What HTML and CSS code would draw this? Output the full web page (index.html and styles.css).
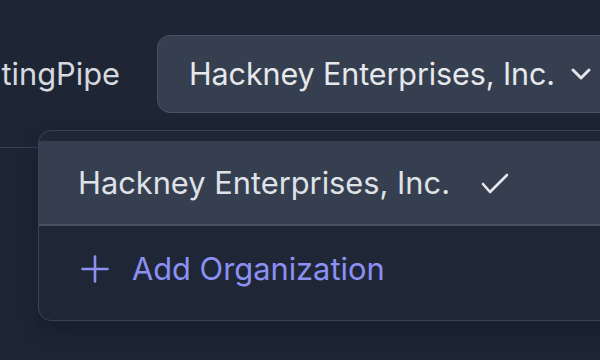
FILE: index.html
```html
<!DOCTYPE html>
<html>
<head>
<meta charset="utf-8">
<link rel="stylesheet" href="styles.css">
</head>
<body>
<div class="page">
  <header class="header">
    <span class="brand">tingPipe</span>
    <button class="org-button">
      <span class="org-name">Hackney Enterprises, Inc.</span>
      <svg class="chevron" width="20" height="12" viewBox="0 0 20 12"><polyline points="2,2 10,10 18,2" fill="none" stroke="#e5e7eb" stroke-width="3" stroke-linecap="round" stroke-linejoin="round"/></svg>
    </button>
  </header>
  <div class="dropdown">
    <div class="item item-active">
      <span class="item-text">Hackney Enterprises, Inc.</span>
      <svg class="check" width="28" height="22" viewBox="0 0 28 22"><polyline points="2,11 9,19 26,2" fill="none" stroke="#e5e7eb" stroke-width="2.6" stroke-linecap="round" stroke-linejoin="round"/></svg>
    </div>
    <div class="item item-add">
      <svg class="plus" width="28" height="28" viewBox="0 0 28 28"><path d="M14 1.5V26.5M1.5 14H26.5" fill="none" stroke="#8b90f2" stroke-width="2.6" stroke-linecap="round"/></svg>
      <span class="add-text">Add Organization</span>
    </div>
  </div>
</div>
</body>
</html>
```
FILE: styles.css
```css
html, body {
  margin: 0;
  padding: 0;
  background: #1e2636;
  width: 600px;
  height: 360px;
  overflow: hidden;
  font-family: Inter, "Noto Sans", sans-serif;
}
.page {
  position: relative;
  width: 600px;
  height: 360px;
  overflow: hidden;
}
.header {
  display: flex;
  align-items: center;
  height: 148px;
  border-bottom: 1px solid #3a4354;
  box-sizing: border-box;
}
.brand {
  flex-shrink: 0;
  color: #d6d9df;
  font-size: 30.8px;
  width: 120px;
  margin-right: 37px;
  white-space: nowrap;
  overflow: hidden;
  text-align: right;
}
.org-button {
  display: flex;
  align-items: center;
  flex-shrink: 0;
  height: 78px;
  width: 460px;
  box-sizing: border-box;
  padding: 0 0 0 31px;
  background: #363f50;
  border: 1.5px solid #4a5365;
  border-radius: 13px;
  font-family: inherit;
  cursor: pointer;
}
.org-name {
  color: #e6e8ec;
  font-size: 30.5px;
  letter-spacing: -0.1px;
  white-space: nowrap;
}
.chevron {
  margin-left: 16px;
  flex-shrink: 0;
}
.dropdown {
  position: absolute;
  left: 38px;
  top: 130px;
  width: 600px;
  height: 191px;
  box-sizing: border-box;
  padding: 10px 0;
  background: #1f2737;
  border: 1.5px solid #3a4354;
  border-radius: 13px;
  box-shadow: 0 10px 20px rgba(10, 14, 22, 0.35);
}
.item {
  display: flex;
  align-items: center;
  height: 85px;
  box-sizing: border-box;
}
.item-active {
  background: #363f50;
  border-bottom: 2px solid #4a5365;
  padding-left: 39px;
}
.item-text {
  color: #dfe2e7;
  font-size: 30.8px;
  white-space: nowrap;
}
.check {
  margin-left: 31px;
  margin-top: 2px;
}
.item-add {
  padding-left: 42px;
}
.add-text {
  color: #8b90f2;
  font-size: 30.8px;
  margin-left: 23px;
}
```
